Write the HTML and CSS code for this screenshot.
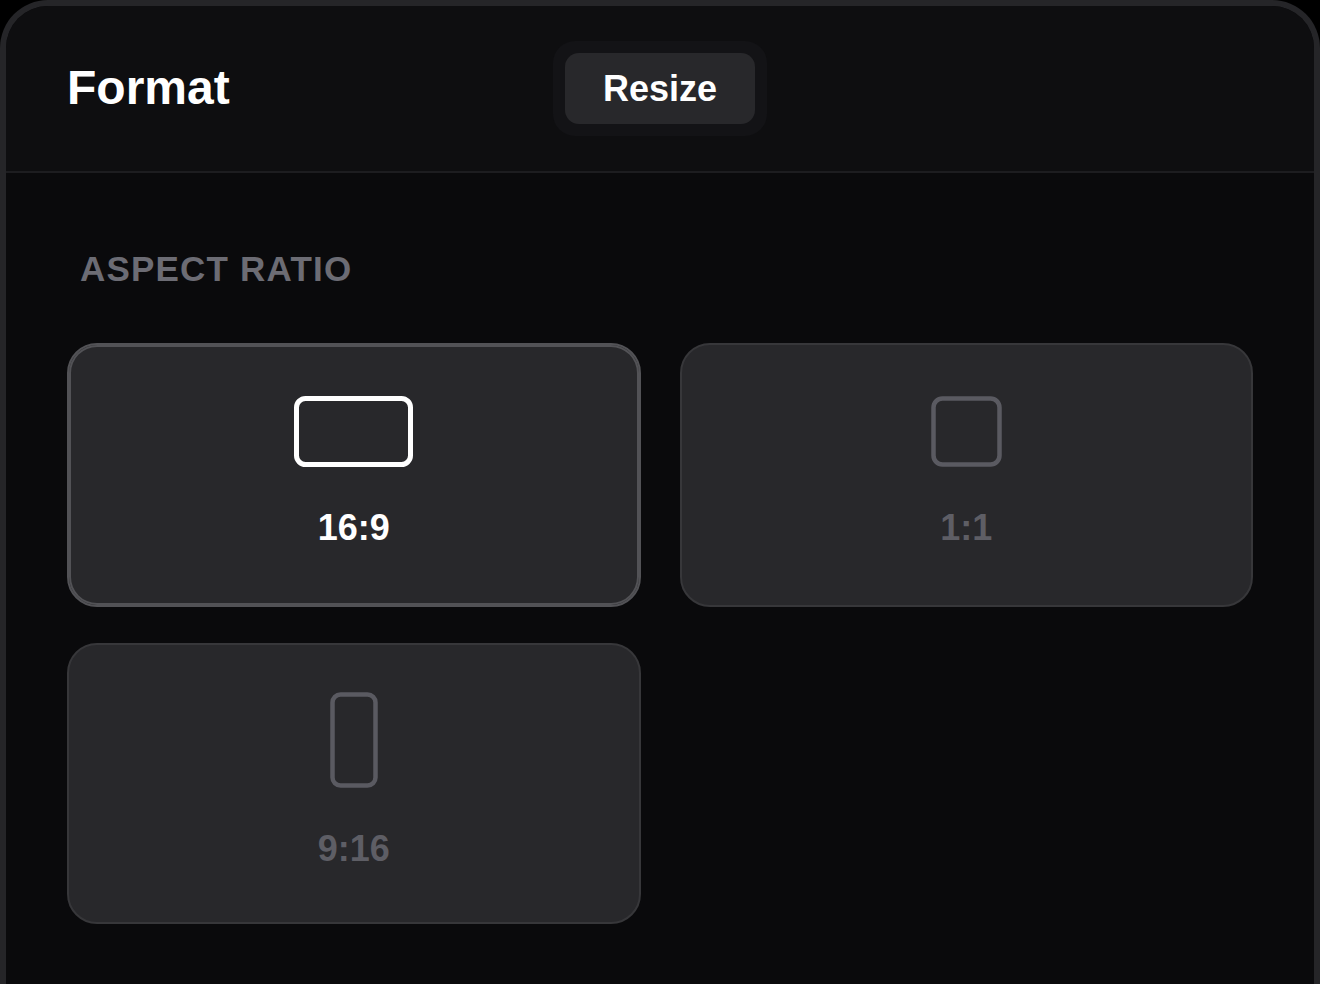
FILE: index.html
```html
<!DOCTYPE html>
<html lang="en">
<head>
<meta charset="utf-8">
<title>Format</title>
<link rel="stylesheet" href="styles.css">
</head>
<body>
<div class="panel">
  <header class="header">
    <h1 class="title">Format</h1>
    <div class="segmented">
      <button class="seg-btn">Resize</button>
    </div>
    <div class="spacer"></div>
  </header>
  <main class="body">
    <h2 class="section-label">ASPECT RATIO</h2>
    <div class="grid">
      <div class="card card--selected">
        <svg class="icon" width="119" height="71" viewBox="0 0 119 71"><rect x="2.5" y="2.5" width="114" height="66" rx="9" fill="none" stroke="#ffffff" stroke-width="5"/></svg>
        <span class="card-label">16:9</span>
      </div>
      <div class="card">
        <svg class="icon" width="71" height="71" viewBox="0 0 71 71"><rect x="2.5" y="2.5" width="66" height="66" rx="9" fill="none" stroke="#5a5a61" stroke-width="4.5"/></svg>
        <span class="card-label">1:1</span>
      </div>
      <div class="card card--portrait">
        <svg class="icon" width="48" height="96" viewBox="0 0 48 96"><rect x="2.5" y="2.5" width="43" height="91" rx="8" fill="none" stroke="#5a5a61" stroke-width="4.5"/></svg>
        <span class="card-label">9:16</span>
      </div>
    </div>
  </main>
</div>
</body>
</html>
```

FILE: styles.css
```css
html, body {
  margin: 0;
  padding: 0;
  background: #000000;
  overflow: hidden;
  height: 984px;
}

body {
  font-family: "Liberation Sans", Arial, sans-serif;
  color: #ffffff;
}

.panel {
  box-sizing: border-box;
  width: 1320px;
  min-height: 1100px;
  border: 6px solid #252528;
  border-bottom: none;
  border-radius: 48px 48px 0 0;
  background: #0a0a0c;
  overflow: hidden;
}

.header {
  display: grid;
  grid-template-columns: 1fr auto 1fr;
  align-items: center;
  height: 165px;
  padding: 0 61px;
  background: #0e0e10;
  border-bottom: 2px solid #1d1d20;
}

.title {
  margin: 0;
  font-size: 48px;
  font-weight: 700;
  line-height: 1;
  color: #ffffff;
  padding-bottom: 2px;
}

.segmented {
  padding: 12px;
  background: #131316;
  border-radius: 22px;
  display: flex;
}

.seg-btn {
  width: 190px;
  height: 71px;
  border: none;
  border-radius: 14px;
  background: #28282b;
  color: #ffffff;
  font-family: "Liberation Sans", Arial, sans-serif;
  font-size: 36px;
  font-weight: 700;
  padding: 0;
}

.body {
  padding: 76px 61px 0;
  background: #0a0a0c;
}

.section-label {
  margin: 0 0 54px 13px;
  font-size: 35px;
  line-height: 40px;
  font-weight: 700;
  color: #6c6c74;
  letter-spacing: 1.2px;
}

.grid {
  display: grid;
  grid-template-columns: 1fr 1fr;
  column-gap: 39px;
  row-gap: 36px;
  align-items: start;
}

.card {
  display: flex;
  flex-direction: column;
  align-items: center;
  background: #28282b;
  border: 2px solid #37373a;
  border-radius: 30px;
  padding: 51px 0 57px;
}

.card--selected {
  border-color: #525256;
  box-shadow: inset 0 0 0 2px #525256;
}

.card--portrait {
  padding: 47px 0 53px;
}

.icon {
  display: block;
}

.card-label {
  margin-top: 41px;
  font-size: 36px;
  line-height: 40px;
  font-weight: 700;
  color: #5e5e65;
}

.card--selected .card-label {
  color: #ffffff;
}
```
